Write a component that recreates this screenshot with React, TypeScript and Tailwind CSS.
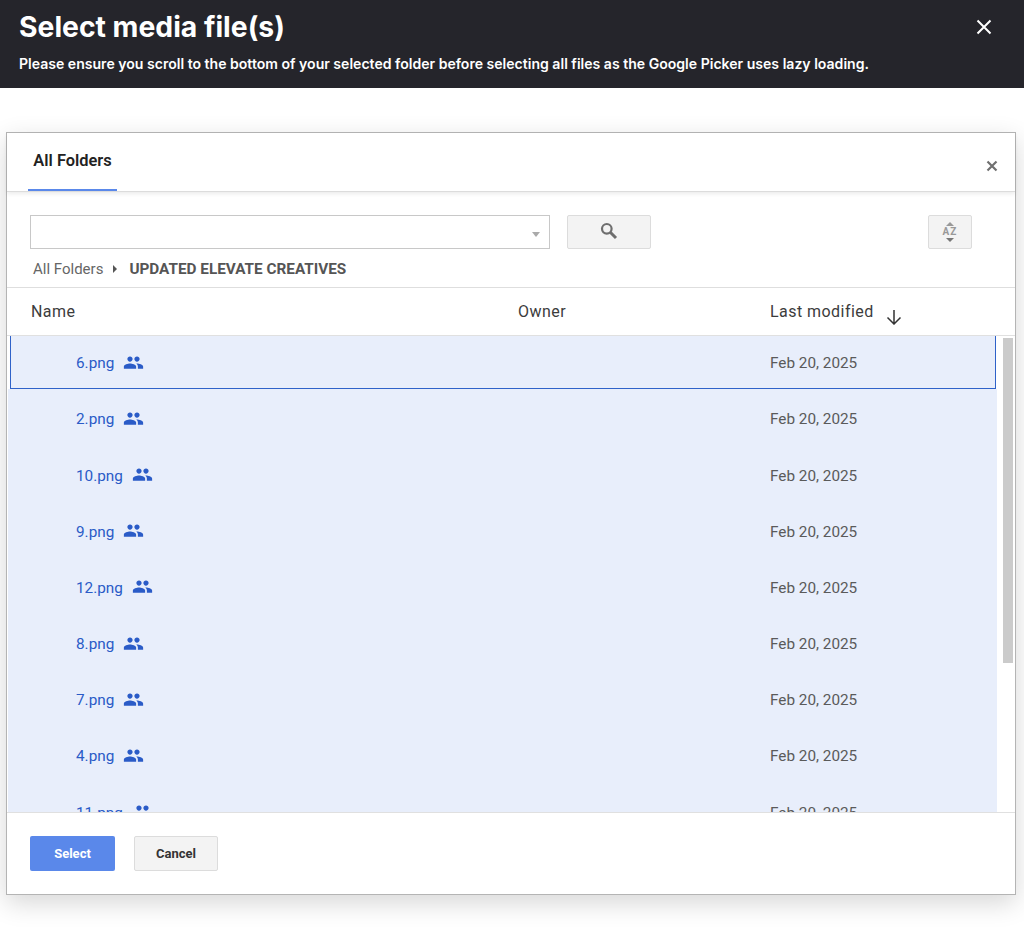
import React from "react";

const rows = ["2.png", "10.png", "9.png", "12.png", "8.png", "7.png", "4.png", "11.png"];

function People() {
  return (
    <svg width="21" height="21" viewBox="0 0 24 24" fill="#2a5bc7" className="-mt-[3px] shrink-0">
      <path d="M16 11c1.66 0 2.99-1.34 2.99-3S17.66 5 16 5s-3 1.34-3 3 1.34 3 3 3zm-8 0c1.66 0 2.99-1.34 2.99-3S9.66 5 8 5 5 6.34 5 8s1.34 3 3 3zm0 2c-2.33 0-7 1.17-7 3.5V19h14v-2.5C15 14.17 10.33 13 8 13zm8 0c-.29 0-.62.02-.97.05 1.16.84 1.97 1.97 1.97 3.45V19h6v-2.5c0-2.33-4.67-3.5-7-3.5z" />
    </svg>
  );
}

export default function App() {
  return (
    <div className="h-[928px] w-[1024px] overflow-hidden bg-white font-['Roboto',sans-serif]">
      <header className="flex h-[88px] items-start justify-between bg-[#25252b] pl-[19px] pr-[30px] font-['Inter',sans-serif] text-white">
        <div>
          <h1 className="mt-[9px] text-[28.3px] font-bold leading-9">Select media file(s)</h1>
          <p className="mt-[9px] text-[14.07px] font-semibold leading-5">
            Please ensure you scroll to the bottom of your selected folder before selecting all files as the Google Picker uses lazy loading.
          </p>
        </div>
        <svg width="20" height="20" viewBox="0 0 20 20" className="mt-[17px]" stroke="white" strokeWidth="2">
          <path d="M3.5 3.5 16.5 16.5M16.5 3.5 3.5 16.5" />
        </svg>
      </header>

      <main className="ml-[6px] mt-[44px] flex h-[763px] w-[1010px] flex-col border border-[#b4b4b4] bg-white shadow-[0_8px_24px_rgba(0,0,0,0.16)]">
        <div className="flex h-[59px] shrink-0 items-start justify-between border-b border-[#dcdcdc] shadow-[0_2px_4px_rgba(0,0,0,0.08)]">
          <div className="ml-[21px] flex h-[58px] w-[89px] items-start justify-center border-b-2 border-[#5a88ea] pt-[18px] text-[16.4px] font-semibold leading-5 text-[#222]">
            All Folders
          </div>
          <svg width="12" height="12" viewBox="0 0 12 12" className="mr-[17px] mt-[27px]" stroke="#707070" strokeWidth="2.2">
            <path d="M1.5 1.5 10.5 10.5M10.5 1.5 1.5 10.5" />
          </svg>
        </div>

        <div className="flex h-[96px] shrink-0 flex-col border-b border-[#dedede] pl-[23px]">
          <div className="mt-[23px] flex items-start">
            <div className="relative h-[34px] w-[520px] border border-[#c8c8c8] bg-white">
              <div className="absolute right-[9px] top-[16px] h-0 w-0 border-x-4 border-t-[5px] border-x-transparent border-t-[#aaa]" />
            </div>
            <div className="ml-[17px] flex h-[34px] w-[84px] items-center justify-center rounded-[2px] border border-[#dcdcdc] bg-[#f3f3f3]">
              <svg width="18" height="18" viewBox="0 0 18 18" fill="none" stroke="#6e6e6e" className="-mt-[2px]">
                <circle cx="6.8" cy="6.8" r="4.8" strokeWidth="2.2" />
                <path d="M10.5 10.5 16 16" strokeWidth="3" />
              </svg>
            </div>
            <div className="ml-[277px] flex h-[34px] w-[44px] flex-col items-center justify-center rounded-[2px] border border-[#dcdcdc] bg-[#f3f3f3] text-[#999]">
              <div className="h-0 w-0 border-x-[4px] border-b-[4px] border-x-transparent border-b-[#999]" />
              <div className="my-[1px] text-[10px] font-bold leading-[10px] tracking-[1px]">AZ</div>
              <div className="h-0 w-0 border-x-[4px] border-t-[4px] border-x-transparent border-t-[#777]" />
            </div>
          </div>
          <div className="mt-[10px] flex items-center pl-[3px] text-[15px] leading-5 text-[#666]">
            <span>All Folders</span>
            <span className="ml-[10px] h-0 w-0 border-y-[4px] border-l-[4px] border-y-transparent border-l-[#555]" />
            <span className="ml-[12px] text-[15.3px] font-bold text-[#555]">UPDATED ELEVATE CREATIVES</span>
          </div>
        </div>

        <div className="flex h-[48px] shrink-0 border-b border-[#e0e0e0] text-[16px] tracking-[0.45px] text-[#3c3c3c]">
          <div className="ml-[24px] w-[487px] pt-[14px] leading-5">Name</div>
          <div className="w-[252px] pt-[14px] leading-5">Owner</div>
          <div className="flex pt-[14px] leading-5">
            Last modified
            <svg width="16" height="16" viewBox="0 0 16 16" fill="none" stroke="#333" strokeWidth="1.5" className="ml-[12px] mt-[7px]">
              <path d="M8 1V15M1.5 8.5 8 15 14.5 8.5" />
            </svg>
          </div>
        </div>

        <div className="flex h-[476px] shrink-0 overflow-hidden">
          <div className="ml-[1px] w-[989px] shrink-0">
            <div className="h-[55.7px] w-[989px]">
              <div className="ml-[2px] flex h-[53px] w-[986px] items-center border-x border-b border-[#2f62c9] bg-[#e8eefb] pt-[3px] text-[15.3px]">
                <div className="flex w-[759px] items-center gap-[9px] pl-[65px] text-[#2a5bc7]">
                  <span>6.png</span>
                  <People />
                </div>
                <span className="text-[#5a5a5a]">Feb 20, 2025</span>
              </div>
              <div className="h-[2.7px] bg-[#e8eefb]" />
            </div>
            {rows.map((name) => (
              <div key={name} className="flex h-[56.2px] items-center bg-[#e8eefb] text-[15.3px]">
                <div className="flex w-[762px] items-center gap-[9px] pl-[68px] text-[#2a5bc7]">
                  <span>{name}</span>
                  <People />
                </div>
                <span className="text-[#5a5a5a]">Feb 20, 2025</span>
              </div>
            ))}
          </div>
          <div className="ml-[6px] mt-[2px] h-[325px] w-[10px] shrink-0 bg-[#cbcbcb]" />
        </div>

        <div className="flex flex-1 items-start border-t border-[#e0e0e0] pl-[23px] pt-[23px] text-[13px] font-bold">
          <div className="flex h-[35px] w-[85px] items-center justify-center rounded-[2px] bg-[#5a88ea] text-white">Select</div>
          <div className="ml-[19px] flex h-[35px] w-[84px] items-center justify-center rounded-[2px] border border-[#dcdcdc] bg-[#f3f3f3] text-[#333]">Cancel</div>
        </div>
      </main>
    </div>
  );
}
